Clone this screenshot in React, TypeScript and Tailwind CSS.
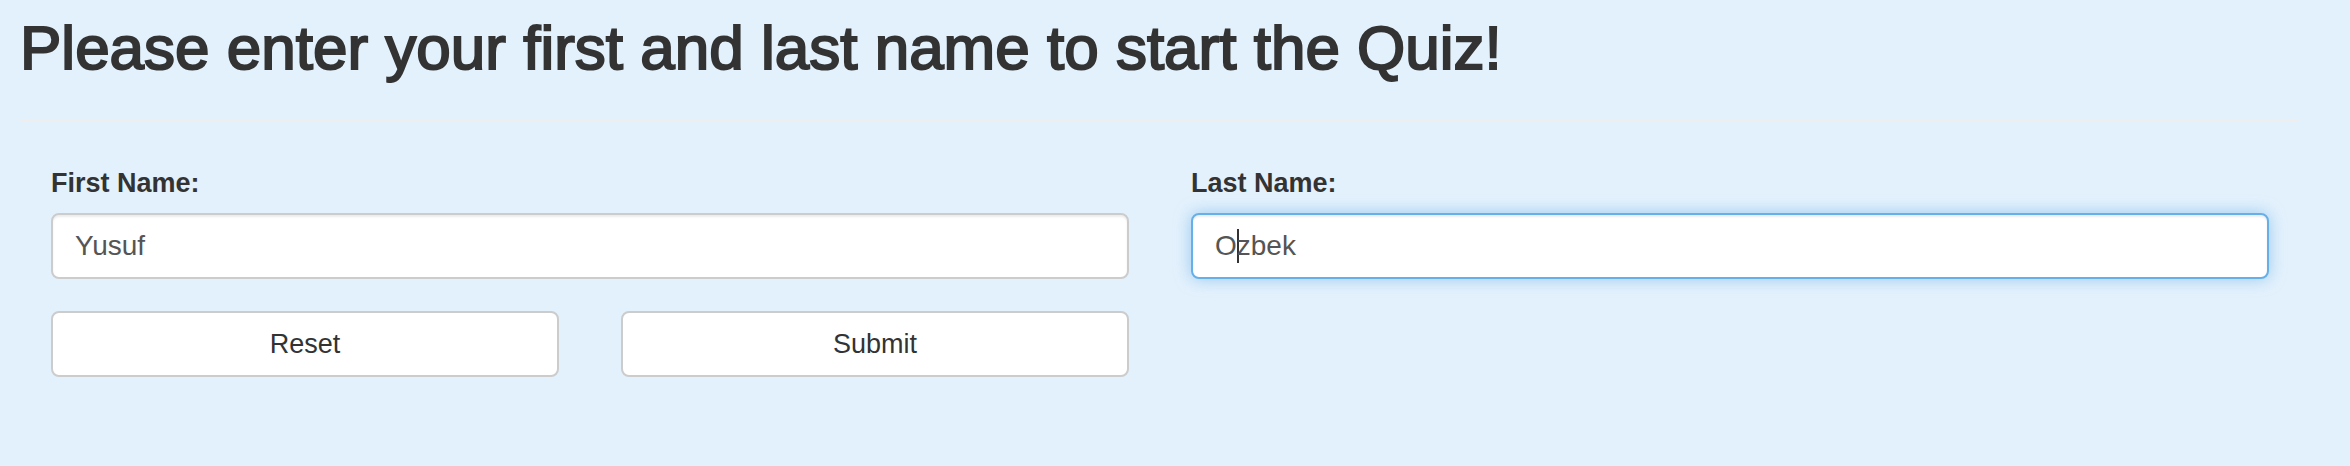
import React from "react";

export default function App() {
  const font = { fontFamily: '"Liberation Sans", Arial, Helvetica, sans-serif' };
  return (
    <div
      className="min-h-[466px] w-full bg-[#e3f1fc] text-[#333]"
      style={font}
    >
      <div className="pl-[20px] pr-[50px] pt-[15px]">
        <h1 className="text-[62px] leading-[66px] font-normal text-[#333] [-webkit-text-stroke:2px_#333] m-0">
          Please enter your first and last name to start the Quiz!
        </h1>
        <div className="mt-[39px] h-[2px] bg-[#eeeeee]" />
        <div className="px-[31px] pt-[46px] grid grid-cols-2 gap-x-[62px]">
          <div className="flex flex-col">
            <label className="text-[27px] leading-[30px] font-bold text-[#333]">
              First Name:
            </label>
            <div className="mt-[15px] h-[66px] rounded-[8px] border-2 border-[#cccccc] bg-white pl-[22px] text-[28px] leading-[62px] text-[#555] shadow-[inset_0_2px_2px_rgba(0,0,0,0.075)]">
              Yusuf
            </div>
            <div className="mt-[32px] grid grid-cols-2 gap-x-[62px]">
              <button className="h-[66px] rounded-[8px] border-2 border-[#cccccc] bg-white text-[27px] leading-[62px] text-[#333]">
                Reset
              </button>
              <button className="h-[66px] rounded-[8px] border-2 border-[#cccccc] bg-white text-[27px] leading-[62px] text-[#333]">
                Submit
              </button>
            </div>
          </div>
          <div className="flex flex-col">
            <label className="text-[27px] leading-[30px] font-bold text-[#333]">
              Last Name:
            </label>
            <div className="mt-[15px] h-[66px] rounded-[8px] border-2 border-[#66afe9] bg-white pl-[22px] text-[28px] leading-[62px] text-[#555] shadow-[inset_0_2px_2px_rgba(0,0,0,0.075),0_0_16px_rgba(102,175,233,0.6)] flex items-center">
              <span>O</span>
              <span className="inline-block w-[2px] h-[34px] bg-[#333] -mr-[2px]" />
              <span>zbek</span>
            </div>
          </div>
        </div>
      </div>
    </div>
  );
}
